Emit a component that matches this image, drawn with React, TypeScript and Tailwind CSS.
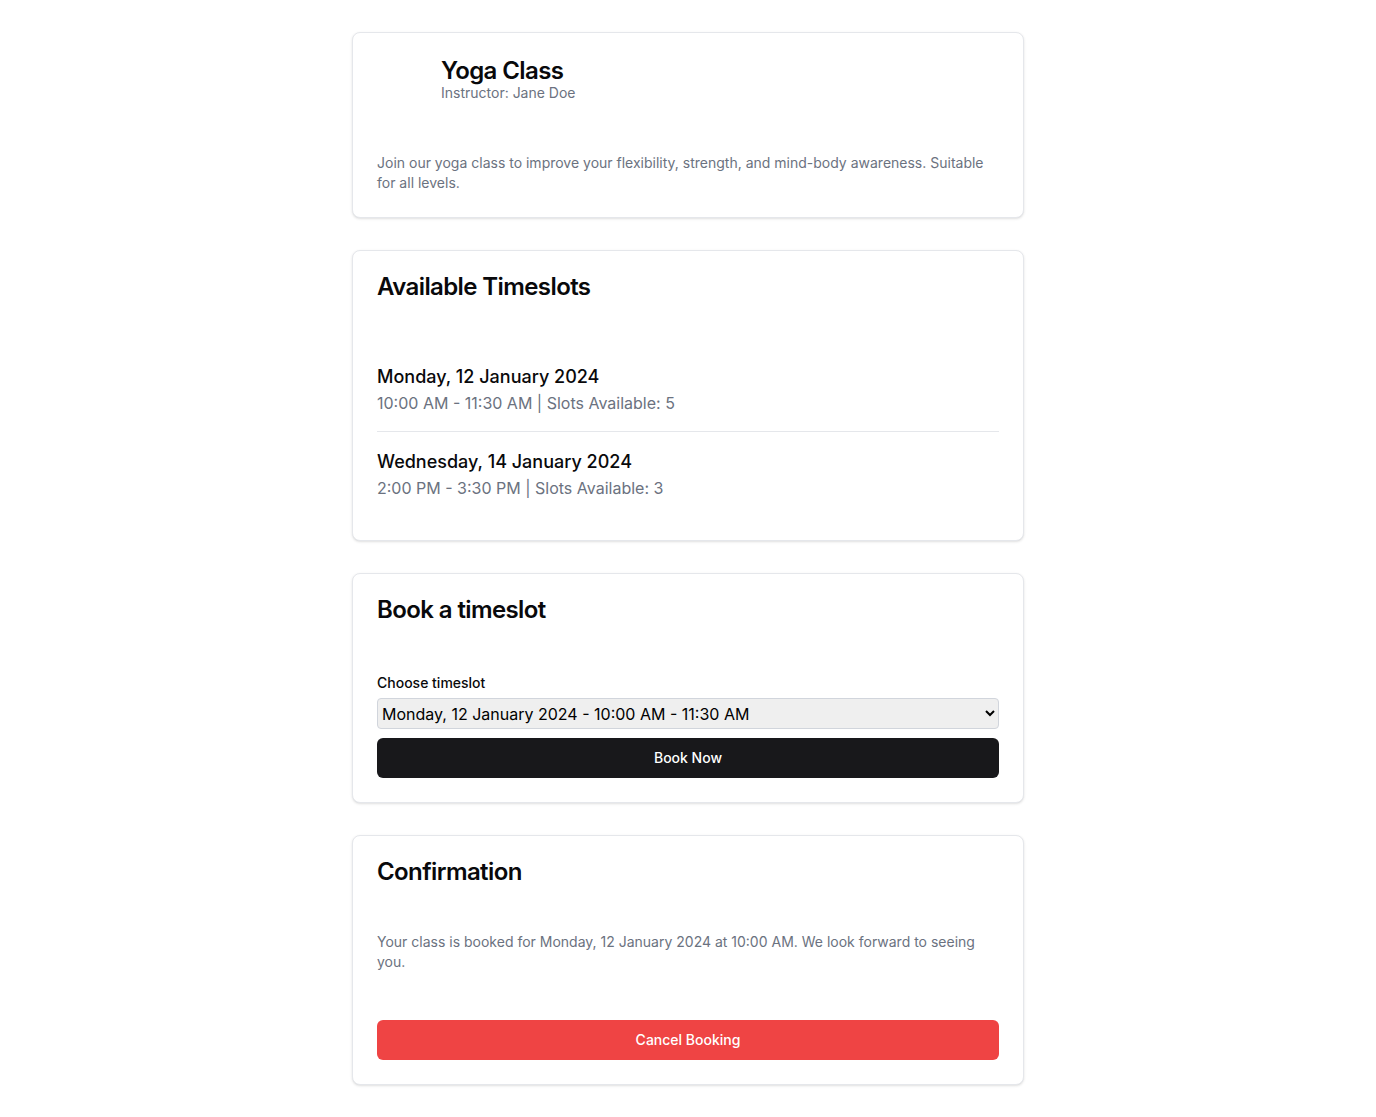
import { useState } from 'react';

const timeslots = [
  { date: 'Monday, 12 January 2024', time: '10:00 AM - 11:30 AM', slots: 5 },
  { date: 'Wednesday, 14 January 2024', time: '2:00 PM - 3:30 PM', slots: 3 },
];

function Card({ children }: { children: React.ReactNode }) {
  return (
    <div className="rounded-lg border border-gray-200 bg-white shadow-sm">{children}</div>
  );
}

function CardTitle({ children }: { children: React.ReactNode }) {
  return (
    <div className="p-6">
      <h2 className="text-2xl font-semibold leading-none tracking-tight text-[#09090b]">{children}</h2>
    </div>
  );
}

export default function App() {
  const [selected, setSelected] = useState(0);

  return (
    <main className="min-h-screen bg-white pt-8 pb-8 font-['Inter',sans-serif] text-[#09090b]">
      <div className="mx-auto max-w-2xl space-y-8">

        {/* Class info */}
        <Card>
          <div className="flex items-center gap-4 p-6">
            <div className="h-12 w-12 shrink-0 rounded-full" />
            <div>
              <h1 className="text-2xl font-semibold leading-none tracking-tight">Yoga Class</h1>
              <p className="text-sm text-[#6b7280]">Instructor: Jane Doe</p>
            </div>
          </div>
          <div className="p-6">
            <p className="text-sm text-[#6b7280]">
              Join our yoga class to improve your flexibility, strength, and mind-body awareness. Suitable for all levels.
            </p>
          </div>
        </Card>

        {/* Timeslots */}
        <Card>
          <CardTitle>Available Timeslots</CardTitle>
          <div className="p-6">
            <div className="divide-y divide-gray-200">
              {timeslots.map(t => (
                <div key={t.date} className="py-4">
                  <h3 className="text-lg font-medium">{t.date}</h3>
                  <p className="text-[#6b7280]">{t.time} | Slots Available: {t.slots}</p>
                </div>
              ))}
            </div>
          </div>
        </Card>

        {/* Booking */}
        <Card>
          <CardTitle>Book a timeslot</CardTitle>
          <div className="p-6">
            <div>
              <label htmlFor="timeslot" className="text-sm font-medium">Choose timeslot</label>
            </div>
            <select id="timeslot" value={selected} onChange={e => setSelected(Number(e.target.value))}
              className="mt-1 block h-[31px] w-full rounded border border-gray-300 bg-[#efefef] pl-0 text-base text-black">
              {timeslots.map((t, i) => (
                <option key={t.date} value={i}>{t.date} - {t.time}</option>
              ))}
            </select>
            <button className="mt-[9px] h-10 w-full rounded-md bg-[#18181b] text-sm font-medium text-white">
              Book Now
            </button>
          </div>
        </Card>

        {/* Confirmation */}
        <Card>
          <CardTitle>Confirmation</CardTitle>
          <div className="p-6">
            <p className="text-sm text-[#6b7280]">
              Your class is booked for Monday, 12 January 2024 at 10:00 AM. We look forward to seeing you.
            </p>
          </div>
          <div className="p-6">
            <button className="h-10 w-full rounded-md bg-[#ef4444] text-sm font-medium text-white">
              Cancel Booking
            </button>
          </div>
        </Card>

      </div>
    </main>
  );
}
